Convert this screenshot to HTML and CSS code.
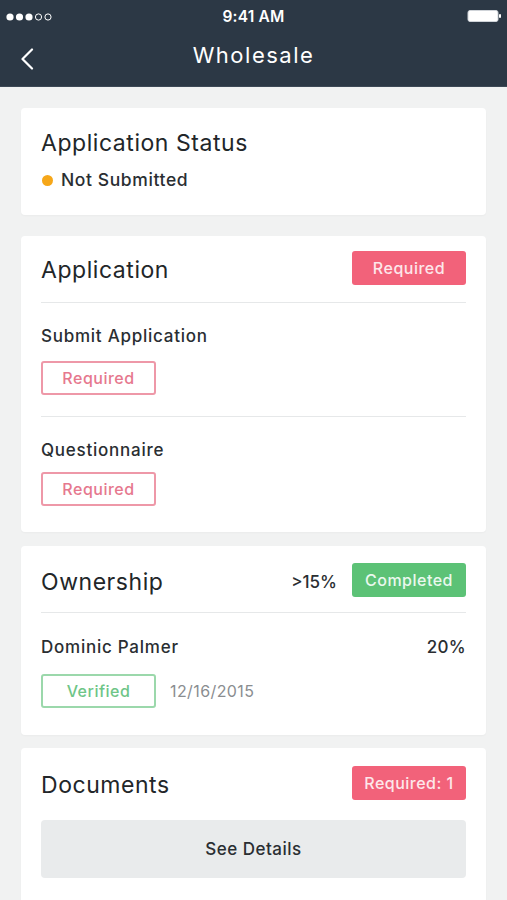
FILE: index.html
```html
<!DOCTYPE html>
<html>
<head>
<meta charset="utf-8">
<link rel="stylesheet" href="styles.css">
</head>
<body>
<header class="topbar">
  <div class="statusbar">
    <svg class="signal" width="48" height="8" viewBox="0 0 48 8">
      <circle cx="4" cy="4" r="3.6" fill="#fff"/>
      <circle cx="13.5" cy="4" r="3.6" fill="#fff"/>
      <circle cx="23" cy="4" r="3.6" fill="#fff"/>
      <circle cx="32.5" cy="4" r="3.1" fill="none" stroke="#fff" stroke-width="1"/>
      <circle cx="42" cy="4" r="3.1" fill="none" stroke="#fff" stroke-width="1"/>
    </svg>
    <span class="time">9:41 AM</span>
    <svg class="battery" width="36" height="14" viewBox="0 0 36 14">
      <rect x="1" y="1.5" width="30" height="11" rx="2" fill="#fff" stroke="#cfd3d8" stroke-width="1"/>
      <rect x="32" y="5" width="2" height="4" rx="1" fill="#fff"/>
    </svg>
  </div>
  <div class="navbar">
    <svg class="back" width="14" height="22" viewBox="0 0 14 22">
      <path d="M12 1.5 L2.5 11 L12 20.5" fill="none" stroke="#fff" stroke-width="2.2" stroke-linecap="round" stroke-linejoin="round"/>
    </svg>
    <h1 class="nav-title">Wholesale</h1>
  </div>
</header>

<main class="content">
  <section class="card card-status">
    <h2 class="card-title">Application Status</h2>
    <div class="status-line"><span class="dot"></span>Not Submitted</div>
  </section>

  <section class="card card-app">
    <div class="card-head">
      <h2 class="card-title">Application</h2>
      <span class="badge badge-red">Required</span>
    </div>
    <div class="item">
      <div class="item-name">Submit Application</div>
      <span class="pill pill-red">Required</span>
    </div>
    <div class="item">
      <div class="item-name">Questionnaire</div>
      <span class="pill pill-red">Required</span>
    </div>
  </section>

  <section class="card card-own">
    <div class="card-head">
      <h2 class="card-title">Ownership</h2>
      <div class="head-right">
        <span class="threshold">&gt;15%</span>
        <span class="badge badge-green">Completed</span>
      </div>
    </div>
    <div class="item">
      <div class="item-row">
        <span class="item-name">Dominic Palmer</span>
        <span class="item-value">20%</span>
      </div>
      <div class="pill-row">
        <span class="pill pill-green">Verified</span>
        <span class="date">12/16/2015</span>
      </div>
    </div>
  </section>

  <section class="card card-docs">
    <div class="card-head card-head-plain">
      <h2 class="card-title">Documents</h2>
      <span class="badge badge-red">Required: 1</span>
    </div>
    <button class="details-btn">See Details</button>
  </section>
</main>
</body>
</html>
```

FILE: styles.css
```css
* { box-sizing: border-box; }

html, body {
  margin: 0;
  padding: 0;
}

body {
  width: 507px;
  height: 900px;
  overflow: hidden;
  background: #f1f2f2;
  font-family: Inter, "Liberation Sans", sans-serif;
  color: #262a2e;
}

.topbar {
  background: #2c3845;
  color: #fff;
  height: 87px;
  border-bottom: 1px solid #3d4956;
}

.statusbar {
  height: 33px;
  display: flex;
  align-items: center;
  justify-content: space-between;
  padding: 0 4px 0 6px;
  position: relative;
}

.signal { display: block; }

.time {
  font-size: 15.5px;
  font-weight: 600;
  letter-spacing: 0.2px;
  position: absolute;
  left: 0;
  right: 0;
  text-align: center;
  top: 7px;
}

.battery { display: block; margin-top: -1px; }

.navbar {
  height: 53px;
  display: flex;
  align-items: center;
  position: relative;
  padding-left: 20px;
}

.back { display: block; margin-top: -1px; }

.nav-title {
  position: absolute;
  left: 0;
  right: 0;
  margin: 0;
  text-align: center;
  font-size: 22px;
  font-weight: 400;
  letter-spacing: 1.5px;
  top: 9px;
  pointer-events: none;
}

.content {
  padding: 21px 21px 0;
  display: flex;
  flex-direction: column;
}

.card {
  background: #fff;
  border-radius: 4px;
  padding: 0 20px;
  box-shadow: 0 1px 2px rgba(0, 0, 0, 0.03);
}

.card-status {
  padding-top: 21px;
  padding-bottom: 24px;
  margin-bottom: 21px;
}

.card-app {
  padding-bottom: 26px;
  margin-bottom: 14px;
}

.card-own {
  padding-bottom: 27px;
  margin-bottom: 13px;
}

.card-docs {
  padding-bottom: 40px;
}

.card-title {
  margin: 0;
  font-size: 23px;
  font-weight: 400;
  line-height: 28px;
  letter-spacing: 0.55px;
  color: #222629;
}

.status-line {
  margin-top: 12px;
  display: flex;
  align-items: center;
  font-size: 17.5px;
  line-height: 22px;
  font-weight: 500;
  letter-spacing: 0.6px;
  color: #2a2e32;
}

.dot {
  width: 11px;
  height: 11px;
  border-radius: 50%;
  background: #f6a719;
  margin-right: 8px;
  margin-left: 1px;
}

.card-head {
  display: flex;
  justify-content: space-between;
  align-items: center;
  padding: 15px 0 17px;
  border-bottom: 1px solid #e6e8e9;
}

.card-head .card-title { margin-top: 4px; }

.card-own .card-head { padding-top: 17px; padding-bottom: 15px; }

.card-head-plain {
  border-bottom: none;
  padding: 18px 0 20px;
}

.head-right {
  display: flex;
  align-items: center;
  gap: 15px;
}

.threshold {
  font-size: 17px;
  font-weight: 500;
  color: #2a2e32;
  margin-top: 4px;
}

.badge {
  display: inline-flex;
  align-items: center;
  justify-content: center;
  width: 114px;
  height: 34px;
  border-radius: 3px;
  color: #fff;
  font-size: 16px;
  font-weight: 500;
  letter-spacing: 0.5px;
}

.badge-red { background: #f2627a; color: #fde7ea; }
.badge-green { background: #5cc276; color: #eaf8ee; }

.item {
  padding: 22px 0 0;
}

.item .pill { margin-top: 14px; }

.item + .item {
  border-top: 1px solid #e6e8e9;
  margin-top: 21px;
  padding-top: 22px;
}

.item + .item .pill { margin-top: 11px; }

.card-own .item { padding-top: 23px; }

.item-name {
  font-size: 17px;
  line-height: 22px;
  font-weight: 500;
  letter-spacing: 0.75px;
  color: #2a2e32;
  display: block;
}

.item-row {
  display: flex;
  justify-content: space-between;
  align-items: center;
}

.item-value {
  font-size: 17px;
  line-height: 22px;
  font-weight: 500;
  letter-spacing: 0.3px;
  color: #2a2e32;
}

.pill {
  display: inline-flex;
  align-items: center;
  justify-content: center;
  width: 115px;
  height: 34px;
  border-radius: 3px;
  font-size: 16px;
  font-weight: 500;
  letter-spacing: 0.5px;
}

.pill-red {
  border: 2px solid #ee98a8;
  color: #e6788e;
}

.pill-green {
  border: 2px solid #9bd8ab;
  color: #6ec587;
}

.pill-row {
  display: flex;
  align-items: center;
  gap: 14px;
  margin-top: 16px;
}

.pill-row .pill { margin-top: 0; }

.date {
  font-size: 16px;
  color: #8a8d90;
  letter-spacing: 0.4px;
}

.details-btn {
  display: block;
  width: 100%;
  height: 58px;
  border: none;
  border-radius: 4px;
  background: #e9ebec;
  font-family: inherit;
  font-size: 17px;
  font-weight: 500;
  letter-spacing: 0.5px;
  color: #2a2e32;
}
```
